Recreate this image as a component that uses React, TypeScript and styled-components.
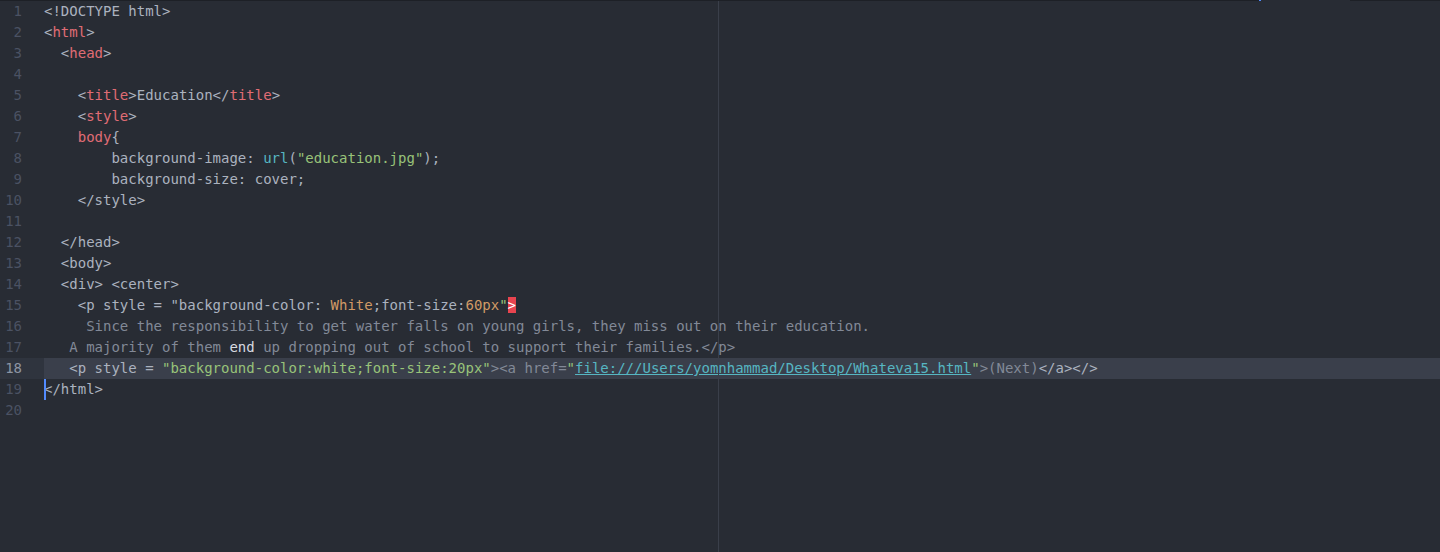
import styled, { createGlobalStyle } from "styled-components";

type Kind = "text" | "dim" | "bright" | "tag" | "str" | "attr" | "fn" | "link" | "invalid";
type Token = [Kind, string];

const lines: Token[][] = [
  [["text", "<!DOCTYPE html>"]],
  [["text", "<"], ["tag", "html"], ["text", ">"]],
  [["text", "  <"], ["tag", "head"], ["text", ">"]],
  [],
  [
    ["text", "    <"],
    ["tag", "title"],
    ["text", ">Education</"],
    ["tag", "title"],
    ["text", ">"],
  ],
  [["text", "    <"], ["tag", "style"], ["text", ">"]],
  [["text", "    "], ["tag", "body"], ["text", "{"]],
  [
    ["text", "        background-image: "],
    ["fn", "url"],
    ["text", "("],
    ["str", '"education.jpg"'],
    ["text", ");"],
  ],
  [["text", "        background-size: cover;"]],
  [["text", "    </style>"]],
  [],
  [["text", "  </head>"]],
  [["text", "  <body>"]],
  [["text", "  <div> <center>"]],
  [
    ["text", '    <p style = "background-color: '],
    ["attr", "White"],
    ["text", ";font-size:"],
    ["attr", "60px"],
    ["str", '"'],
    ["invalid", ">"],
  ],
  [["dim", "     Since the responsibility to get water falls on young girls, they miss out on their education."]],
  [
    ["dim", "   A majority of them "],
    ["bright", "end"],
    ["dim", " up dropping out of school to support their families.</p>"],
  ],
  [
    ["text", "   <p style = "],
    ["str", '"background-color:white;font-size:20px"'],
    ["dim", "><a href="],
    ["str", '"'],
    ["link", "file:///Users/yomnhammad/Desktop/Whateva15.html"],
    ["str", '"'],
    ["dim", ">(Next)"],
    ["text", "</a></>"],
  ],
  [["text", "</html>"]],
  [],
];

const ACTIVE = 18;

const colors: Record<Kind, string> = {
  text: "#abb2bf",
  dim: "#828997",
  bright: "#d7dae0",
  tag: "#e06c75",
  str: "#98c379",
  attr: "#d19a66",
  fn: "#56b6c2",
  link: "#56b6c2",
  invalid: "#ffffff",
};

const GlobalStyle = createGlobalStyle`
  html, body {
    margin: 0;
    padding: 0;
    background: #282c34;
  }
  #root {
    height: 552px;
    overflow: hidden;
  }
`;

const Window = styled.div`
  display: flex;
  flex-direction: column;
  height: 552px;
  background: #282c34;
  font-family: "DejaVu Sans Mono", "Liberation Mono", monospace;
  font-size: 14px;
  line-height: 21px;
`;

const TopBar = styled.div`
  display: flex;
  height: 1px;
  flex-shrink: 0;
`;

const TopEdge = styled.div<{ $w?: number }>`
  flex: ${(p) => (p.$w ? `0 0 ${p.$w}px` : "1")};
  background: #1d2026;
`;

const TabMarker = styled.div`
  flex: 0 0 2px;
  background: #528bff;
`;

const TabGap = styled.div`
  flex: 0 0 89px;
`;

const Editor = styled.div`
  position: relative;
  display: flex;
  flex: 1;
`;

const Gutter = styled.div`
  width: 44px;
  flex-shrink: 0;
`;

const LineNumber = styled.div<{ $active: boolean }>`
  height: 21px;
  padding-right: 22px;
  text-align: right;
  color: ${(p) => (p.$active ? "#8d95a3" : "#4b5263")};
  background: ${(p) => (p.$active ? "#2f343e" : "transparent")};
`;

const Code = styled.div`
  flex: 1;
`;

const Line = styled.div<{ $active: boolean }>`
  position: relative;
  height: 21px;
  white-space: pre;
  background: ${(p) => (p.$active ? "#3a3f4b" : "transparent")};
`;

const Token = styled.span<{ $kind: Kind }>`
  color: ${(p) => colors[p.$kind]};
  text-decoration: ${(p) => (p.$kind === "link" ? "underline" : "none")};
  background: ${(p) => (p.$kind === "invalid" ? "#e8444f" : "transparent")};
`;

const Cursor = styled.span`
  position: absolute;
  left: 0;
  top: 0;
  width: 2px;
  height: 21px;
  background: #528bff;
`;

const WrapGuide = styled.div`
  position: absolute;
  top: 0;
  bottom: 0;
  left: 718px;
  width: 1px;
  background: #3a3f4a;
`;

export default function App() {
  return (
    <>
      <GlobalStyle />
      <Window>
        <TopBar>
          <TopEdge />
          <TabMarker />
          <TabGap />
          <TopEdge $w={90} />
        </TopBar>
        <Editor>
          <Gutter>
            {lines.map((_, i) => (
              <LineNumber key={i} $active={i + 1 === ACTIVE}>
                {i + 1}
              </LineNumber>
            ))}
          </Gutter>
          <Code>
            {lines.map((tokens, i) => (
              <Line key={i} $active={i + 1 === ACTIVE}>
                {i + 1 === 19 && <Cursor />}
                {tokens.map(([kind, value], j) => (
                  <Token key={j} $kind={kind}>
                    {value}
                  </Token>
                ))}
              </Line>
            ))}
          </Code>
          <WrapGuide />
        </Editor>
      </Window>
    </>
  );
}
